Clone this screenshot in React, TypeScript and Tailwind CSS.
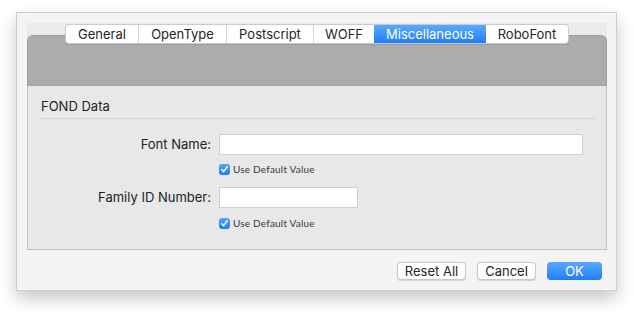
import React from "react";

const tabs = [
  { label: "General", w: 72 },
  { label: "OpenType", w: 88 },
  { label: "Postscript", w: 87 },
  { label: "WOFF", w: 61 },
  { label: "Miscellaneous", w: 112 },
  { label: "RoboFont", w: 82 },
];

function Checkbox() {
  return (
    <span className="w-[11px] h-[11px] rounded-[3px] bg-gradient-to-b from-[#4ea5ff] to-[#1a7cf7] flex items-center justify-center">
      <svg width="9" height="9" viewBox="0 0 9 9">
        <path d="M1.8 4.8 L3.6 6.8 L7.2 1.8" fill="none" stroke="white" strokeWidth="1.5" strokeLinecap="round" strokeLinejoin="round" />
      </svg>
    </span>
  );
}

function Button({ label, primary, w }: { label: string; primary?: boolean; w: string }) {
  return (
    <button
      className={`${w} h-[18px] rounded-[4px] text-[13px] leading-none flex items-center justify-center ${
        primary
          ? "bg-gradient-to-b from-[#5ba9ff] to-[#1b7ff9] text-white"
          : "bg-white border border-[#c8c8c8] text-[#262626] shadow-[0_0.5px_1px_rgba(0,0,0,0.15)]"
      }`}
    >
      {label}
    </button>
  );
}

export default function App() {
  return (
    <div className="w-[634px] h-[312px] bg-white pt-[12px] pl-[16px] font-['Inter','Liberation_Sans',sans-serif] text-[#222]">
      <div className="w-[601px] h-[279px] bg-[#f4f4f4] border border-[#cdcdcd] shadow-[0_8px_16px_rgba(0,0,0,0.22)] flex flex-col pl-[10px] pr-[9px] pt-[10px]">
        {/* tab view */}
        <div className="relative w-[580px] bg-[#ebebeb]">
          <div className="h-[12px]" />
          <div className="h-[50px] bg-[#acacac] rounded-t-[6px] border border-b-0 border-[#9d9d9d]" />
          <div className="h-[165px] bg-[#e8e8e8] border border-t-[#a3a3a3] border-[#c2c2c2] px-[11px] pt-[10px]">
            <div className="text-[13px] pl-[2px] h-[22px] leading-[20px]">FOND Data</div>
            <div className="h-px bg-[#d2d2d2]" />
            <div className="grid grid-cols-[172px_1fr] gap-x-[8px] mt-[15px] text-[13px]">
              <div className="text-right h-[21px] leading-[21px]">Font Name:</div>
              <div className="w-[364px] h-[21px] bg-white border border-[#cfcfcf]" />
              <div />
              <div className="flex items-center gap-[3px] mt-[9px] h-[11px] text-[10px] font-['Lato',sans-serif] tracking-[0.2px] text-[#3a3a3a]">
                <Checkbox />
                <span>Use Default Value</span>
              </div>
              <div className="text-right h-[21px] leading-[21px] mt-[12px]">Family ID Number:</div>
              <div className="w-[139px] h-[21px] bg-white border border-[#cfcfcf] mt-[12px]" />
              <div />
              <div className="flex items-center gap-[3px] mt-[10px] h-[11px] text-[10px] font-['Lato',sans-serif] tracking-[0.2px] text-[#3a3a3a]">
                <Checkbox />
                <span>Use Default Value</span>
              </div>
            </div>
          </div>
          {/* segmented control */}
          <div className="absolute left-[38px] top-[1px] h-[20px] flex bg-white rounded-[4px] border border-[#cbcbcb] overflow-hidden text-[13px] shadow-[0_0.5px_1px_rgba(0,0,0,0.1)]">
            {tabs.map((t, i) => (
              <div
                key={t.label}
                style={{ width: t.w }}
                className={`flex items-center justify-center leading-none ${
                  t.label === "Miscellaneous"
                    ? "bg-gradient-to-b from-[#5aa9ff] to-[#1a7ef9] text-white"
                    : "text-[#262626]"
                } ${i > 0 && t.label !== "Miscellaneous" && tabs[i - 1].label !== "Miscellaneous" ? "border-l border-[#d6d6d6]" : ""}`}
              >
                {t.label}
              </div>
            ))}
          </div>
        </div>
        <div className="flex justify-end gap-[11px] mt-[12px] pr-[5px]">
          <Button label="Reset All" w="w-[69px]" />
          <Button label="Cancel" w="w-[59px]" />
          <Button label="OK" primary w="w-[55px]" />
        </div>
      </div>
    </div>
  );
}
